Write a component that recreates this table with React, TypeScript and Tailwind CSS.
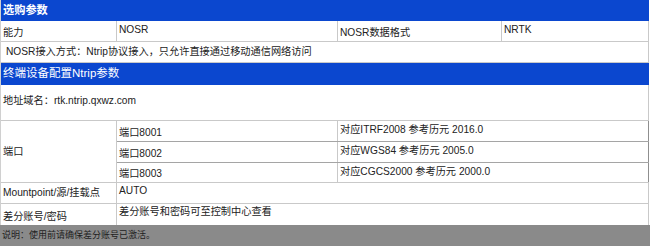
import React from "react";

const F = { fontFamily: '"Liberation Sans", Arial, "Noto Sans CJK SC", sans-serif' };

export default function App() {
  const cell = "flex border-r border-[#c9c9c9] px-[2px] text-[10.2px] leading-[12px] text-[#222] whitespace-nowrap";
  return (
    <div className="w-[650px] h-[246px] bg-white overflow-hidden" style={F}>
      <div className="w-[649px] border-l border-[#d0d0d0]">
        {/* header 1 */}
        <div className="h-[21px] bg-[#0b47cf] flex items-center pl-[2px] text-white font-bold text-[11.2px]">
          选购参数
        </div>
        {/* 能力 row */}
        <div className="h-[21px] flex border-b border-[#c9c9c9]">
          <div className={`${cell} w-[116px] items-end pb-[2px]`}>能力</div>
          <div className={`${cell} w-[221px] items-start pt-[3px]`}>NOSR</div>
          <div className={`${cell} w-[164px] items-end pb-[2px]`}>NOSR数据格式</div>
          <div className={`${cell} flex-1 items-start pt-[3px]`}>NRTK</div>
        </div>
        {/* NOSR 接入 row */}
        <div className="h-[21px] flex border-b border-[#c9c9c9]">
          <div className={`${cell} flex-1 items-center pl-[5px]`}>
            NOSR接入方式：Ntrip协议接入，只允许直接通过移动通信网络访问
          </div>
        </div>
        {/* header 2 */}
        <div className="h-[22px] bg-[#0b47cf] flex items-center pl-[2px] text-white text-[11.5px]">
          终端设备配置Ntrip参数
        </div>
        {/* 地址域名 */}
        <div className="h-[36px] flex border-b border-[#c9c9c9]">
          <div className={`${cell} flex-1 items-center pb-[3px]`}>地址域名：rtk.ntrip.qxwz.com</div>
        </div>
        {/* 端口 block */}
        <div className="flex border-b border-[#c9c9c9]">
          <div className={`${cell} w-[116px] items-center pt-[1px]`}>端口</div>
          <div className="flex-1 flex flex-col">
            {[
              ["端口8001", "对应ITRF2008 参考历元 2016.0", "h-[21px]"],
              ["端口8002", "对应WGS84 参考历元 2005.0", "h-[21px]"],
              ["端口8003", "对应CGCS2000 参考历元 2000.0", "h-[19px]"],
            ].map(([a, b, h], i) => (
              <div
                key={a}
                className={`${h} flex ${i < 2 ? "border-b border-[#a5a5a5]" : ""}`}
              >
                <div className={`${cell} w-[221px] items-center pt-[3px]`}>{a}</div>
                <div className={`${cell} flex-1 items-start pt-[3px] border-r-[#8f8f8f]`}>{b}</div>
              </div>
            ))}
          </div>
        </div>
        {/* Mountpoint */}
        <div className="h-[21px] flex border-b border-[#c9c9c9]">
          <div className={`${cell} w-[116px] items-start pt-[4px]`}>Mountpoint/源/挂载点</div>
          <div className={`${cell} flex-1 items-start pt-[2px]`}>AUTO</div>
        </div>
        {/* 差分账号 */}
        <div className="h-[21px] flex">
          <div className={`${cell} w-[116px] items-end pb-[2px]`}>差分账号/密码</div>
          <div className={`${cell} flex-1 items-start pt-[2px]`}>差分账号和密码可至控制中心查看</div>
        </div>
      </div>
      {/* footer */}
      <div className="h-[21px] bg-[#8a8a8a] flex items-center pl-[2px] text-[9px] text-[#1e1e1e]">
        说明：使用前请确保差分账号已激活。
      </div>
    </div>
  );
}
